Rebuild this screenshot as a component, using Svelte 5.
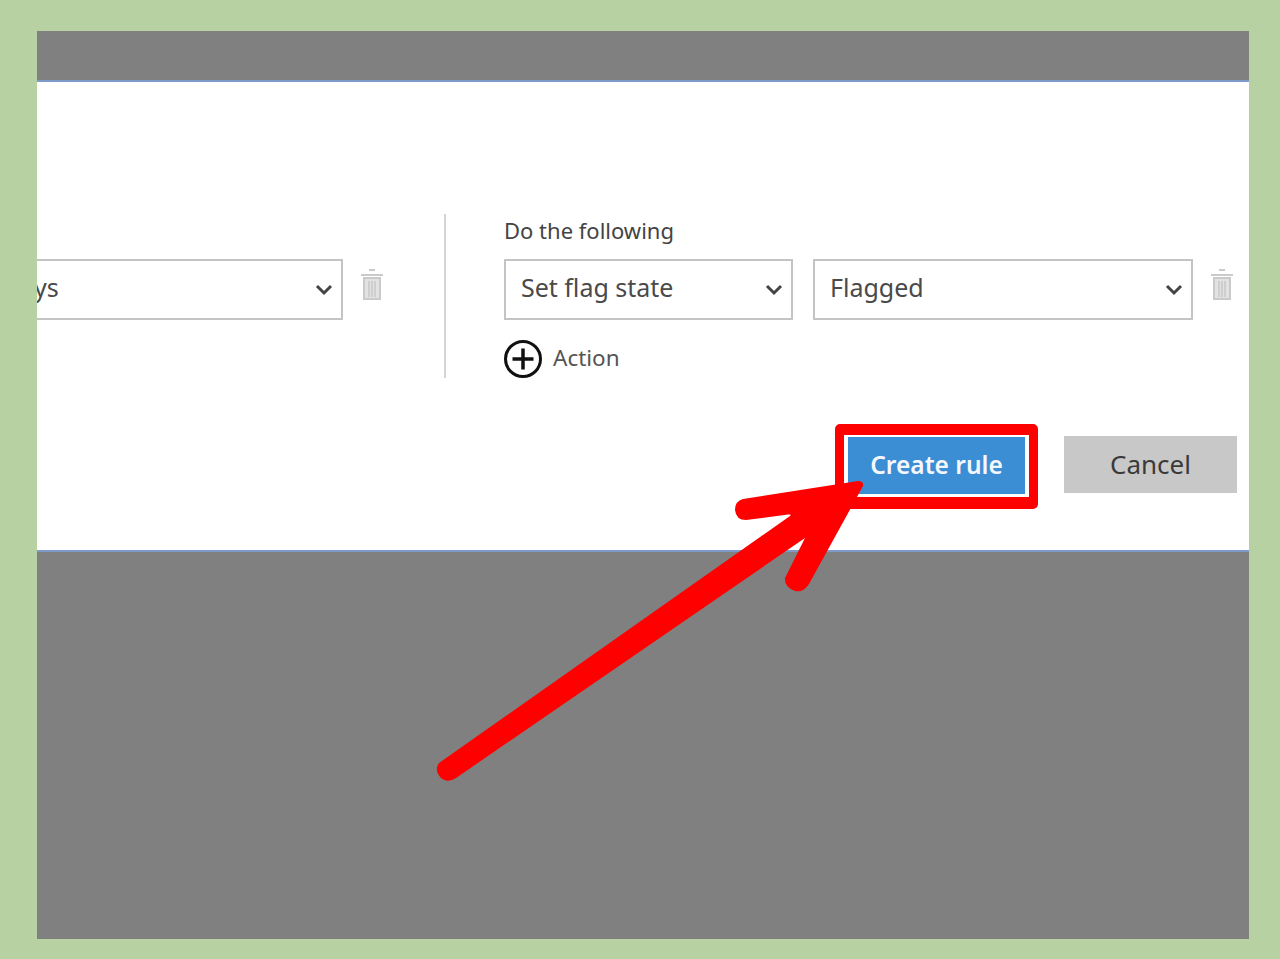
<script>
  const conditionValue = 'ys';
  const actions = ['Set flag state', 'Flagged'];
</script>

<main class="frame">
  <div class="dim top"></div>

  <section class="panel">
    <div class="rule-row">
      <div class="group condition">
        <div class="select wide">
          <span class="clipped">{conditionValue}</span>
          <svg class="chevron" viewBox="0 0 18 12"><path d="M2 2l7 7 7-7" /></svg>
        </div>
        <svg class="trash" viewBox="0 0 22 32">
          <path class="lid" d="M8 1h6M0 6h22" />
          <path class="can" d="M3 9h16v21H3z" />
          <path class="bars" d="M8 12v16M11 12v16M14 12v16" />
        </svg>
      </div>

      <div class="divider"></div>

      <div class="actions">
        <h2>Do the following</h2>
        <div class="group">
          <div class="select action-type">
            <span>{actions[0]}</span>
            <svg class="chevron" viewBox="0 0 18 12"><path d="M2 2l7 7 7-7" /></svg>
          </div>
          <div class="select action-value">
            <span>{actions[1]}</span>
            <svg class="chevron" viewBox="0 0 18 12"><path d="M2 2l7 7 7-7" /></svg>
          </div>
          <svg class="trash" viewBox="0 0 22 32">
            <path class="lid" d="M8 1h6M0 6h22" />
            <path class="can" d="M3 9h16v21H3z" />
            <path class="bars" d="M8 12v16M11 12v16M14 12v16" />
          </svg>
        </div>
        <div class="add-action">
          <svg viewBox="0 0 38 38">
            <circle cx="19" cy="19" r="17.5" />
            <path d="M19 8.500v21M8.500 19h21" />
          </svg>
          <span>Action</span>
        </div>
      </div>
    </div>

    <div class="buttons">
      <div class="highlight">
        <button class="create">Create rule</button>
      </div>
      <button class="cancel">Cancel</button>
    </div>
  </section>

  <div class="dim bottom"></div>

  <svg class="arrow" viewBox="0 0 1280 959">
    <path d="M439 763 L790 516 Q792 514 788 514.500 L746 520 Q736 520 735 510 Q735 501 743 499 L858 481 Q864 481 863 486 L809 584 Q803 593 795 591 Q784 587 785 578 L805 538 L456 778 Q447 784 440 777 Q434 770 439 763 Z" />
  </svg>
</main>

<style>
  :global(body) { background: #b8d1a2; }
  .frame {
    position: relative;
    height: 959px;
    padding: 31px 31px 20px 37px;
    box-sizing: border-box;
    display: flex;
    flex-direction: column;
    font-family: "Noto Sans", sans-serif;
    color: #444;
    overflow: hidden;
  }
  .dim { background: #808080; }
  .top { height: 49px; }
  .bottom { flex: 1; }
  .panel {
    height: 472px;
    box-sizing: border-box;
    background: #fff;
    border-top: 2px solid #7d9ac8;
    border-bottom: 2px solid #7d9ac8;
    padding-top: 132px;
    overflow: hidden;
  }
  .rule-row { display: flex; height: 164px; }
  .group { display: flex; align-items: flex-start; }
  .condition { padding-top: 45px; }
  .select {
    height: 61px;
    box-sizing: border-box;
    border: 2px solid #c4c4c4;
    display: flex;
    align-items: center;
    justify-content: space-between;
    padding: 0 8px 5px 15px;
    font-size: 25px;
    line-height: 1;
    color: #4a4a4a;
  }
  .wide { width: 306px; border-left: 0; padding-left: 0; }
  .clipped { margin-left: -3px; }
  .action-type { width: 289px; }
  .action-value { width: 380px; margin-left: 20px; }
  .chevron { width: 18px; height: 12px; margin-top: 5px; }
  .chevron path { fill: none; stroke: #444; stroke-width: 3; }
  .trash { width: 22px; height: 32px; margin: 10px 0 0 18px; }
  .lid { fill: none; stroke: #cacaca; stroke-width: 2; }
  .can { fill: #e2e2e2; stroke: #cacaca; stroke-width: 2; }
  .bars { fill: none; stroke: #c8c8c8; stroke-width: 1.500; }
  .divider { width: 2px; height: 164px; background: #d4d4d4; margin-left: 61px; }
  .actions { margin-left: 58px; }
  h2 {
    margin: 0;
    height: 45px;
    padding-top: 1px;
    box-sizing: border-box;
    font-size: 22px;
    font-weight: 400;
    line-height: 30px;
    color: #444;
  }
  .add-action {
    display: flex;
    align-items: center;
    gap: 11px;
    margin-top: 20px;
    font-size: 22.500px;
    color: #555;
  }
  .add-action span { margin-bottom: 3px; }
  .add-action svg { width: 38px; height: 38px; }
  .add-action circle { fill: none; stroke: #111; stroke-width: 3; }
  .add-action path { fill: none; stroke: #111; stroke-width: 3.500; }
  .buttons {
    display: flex;
    justify-content: flex-end;
    align-items: flex-start;
    gap: 26px;
    margin-top: 46px;
    padding-right: 12px;
  }
  .highlight {
    display: flex;
    border: solid #fe0000;
    border-width: 11px 9px 12px;
    border-radius: 5px;
    padding: 2px 4px 3px;
    background: #fff;
  }
  button {
    border: 0;
    font-family: inherit;
    height: 57px;
    padding: 0 0 2px;
  }
  .create {
    width: 177px;
    background: #3b8dd4;
    color: #f4f8fc;
    font-size: 24.500px;
    font-weight: 600;
  }
  .cancel {
    width: 173px;
    margin-top: 12px;
    background: #c8c8c8;
    color: #3a3a3a;
    font-size: 26px;
  }
  .arrow {
    position: absolute;
    left: 0;
    top: 0;
    width: 1280px;
    height: 959px;
    pointer-events: none;
  }
  .arrow path { fill: #fe0000; }
</style>
